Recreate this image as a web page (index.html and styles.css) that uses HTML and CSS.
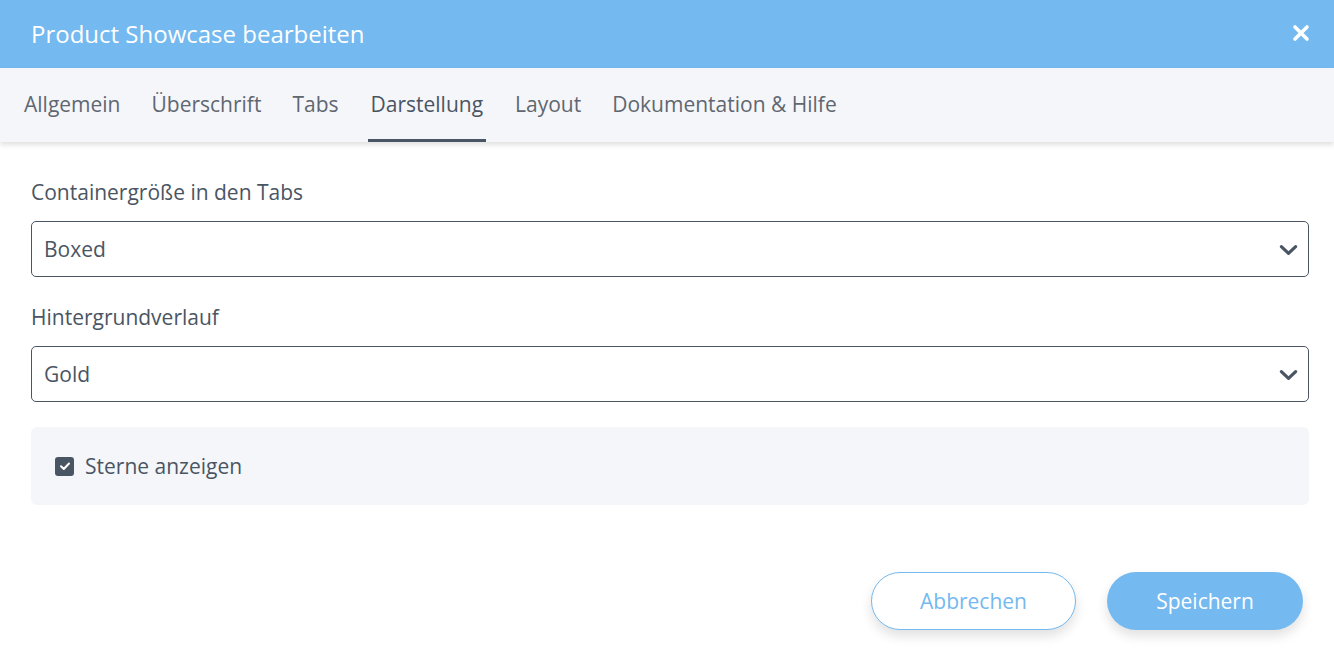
FILE: index.html
```html
<!DOCTYPE html>
<html lang="de">
<head>
<meta charset="utf-8">
<link rel="stylesheet" href="styles.css">
</head>
<body>
<div class="modal">
  <header class="head">
    <h1 class="title">Product Showcase bearbeiten</h1>
    <svg class="close" viewBox="0 0 18 18" width="18" height="18"><path d="M3 3 L15 15 M15 3 L3 15" stroke="#fff" stroke-width="3.6" stroke-linecap="round"/></svg>
  </header>
  <nav class="tabs">
    <span class="tab">Allgemein</span>
    <span class="tab">Überschrift</span>
    <span class="tab">Tabs</span>
    <span class="tab active">Darstellung</span>
    <span class="tab">Layout</span>
    <span class="tab">Dokumentation &amp; Hilfe</span>
  </nav>
  <main class="body">
    <div class="field">
      <label class="label">Containergröße in den Tabs</label>
      <div class="select"><span>Boxed</span>
        <svg class="chev" viewBox="0 0 20 12" width="19" height="12"><path d="M2.5 2.5 L10 9.5 L17.5 2.5" fill="none" stroke="#4a5563" stroke-width="3.4" stroke-linecap="round" stroke-linejoin="round"/></svg>
      </div>
    </div>
    <div class="field">
      <label class="label">Hintergrundverlauf</label>
      <div class="select"><span>Gold</span>
        <svg class="chev" viewBox="0 0 20 12" width="19" height="12"><path d="M2.5 2.5 L10 9.5 L17.5 2.5" fill="none" stroke="#4a5563" stroke-width="3.4" stroke-linecap="round" stroke-linejoin="round"/></svg>
      </div>
    </div>
    <div class="panel">
      <span class="check"><svg viewBox="0 0 18 18" width="18" height="18"><path d="M5 9.3 L7.8 12 L13 6.5" fill="none" stroke="#fff" stroke-width="2" stroke-linecap="round" stroke-linejoin="round"/></svg></span>
      <span class="check-label">Sterne anzeigen</span>
    </div>
  </main>
  <footer class="foot">
    <button class="btn btn-outline">Abbrechen</button>
    <button class="btn btn-fill">Speichern</button>
  </footer>
</div>
</body>
</html>
```
FILE: styles.css
```css
* { box-sizing: border-box; }
html, body { margin: 0; padding: 0; background: #fff; }
body { font-family: "Open Sans", "Noto Sans", sans-serif; color: #4a5563; width: 1334px; height: 664px; overflow: hidden; }
.modal { display: flex; flex-direction: column; height: 664px; }
.head { height: 68px; background: #74b9ef; display: flex; align-items: center; justify-content: space-between; padding: 0 24px 0 31px; }
.title { margin: 0; font-size: 24px; font-weight: 400; color: #fff; letter-spacing: 0; margin-top: -2px; }
.close { display: block; margin-top: -2px; }
.tabs { height: 74px; background: #f5f6fa; display: flex; align-items: stretch; padding-left: 24px; box-shadow: 0 3px 5px rgba(0,0,0,0.12); position: relative; z-index: 1; }
.tab { display: flex; align-items: center; font-size: 21px; color: #606770; margin-right: 31px; padding-top: 1px; border-bottom: 3px solid transparent; }
.tab.active { color: #4a5563; border-bottom-color: #4a5563; padding-left: 3px; padding-right: 3px; margin-left: -2px; margin-right: 29px; }
.body { padding: 36px 25px 0 31px; display: flex; flex-direction: column; }
.field { display: flex; flex-direction: column; margin-bottom: 26px; }
.field + .field { margin-bottom: 24px; }
.label { font-size: 21px; line-height: 28px; margin-bottom: 15px; color: #4a5563; }
.select { height: 56px; border: 1px solid #4a5563; border-radius: 5px; display: flex; align-items: center; justify-content: space-between; padding: 0 10px 0 12px; font-size: 21px; }
.chev { display: block; margin-top: 2px; }
.panel { height: 78px; background: #f5f6fa; border-radius: 6px; display: flex; align-items: center; padding-left: 24px; margin-top: 1px; }
.check { width: 19px; height: 19px; background: #4a5563; border-radius: 3px; display: flex; align-items: center; justify-content: center; margin-right: 11px; }
.check svg { display: block; }
.check-label { font-size: 21px; color: #4a5563; }
.foot { display: flex; justify-content: flex-end; gap: 31px; padding: 67px 31px 0 0; }
.btn { height: 58px; border-radius: 29px; font-family: "Open Sans", "Noto Sans", sans-serif; font-size: 21px; box-shadow: 0 6px 12px rgba(0,0,0,0.12); cursor: pointer; }
.btn-outline { width: 205px; background: #fff; border: 1px solid #74b9ef; color: #74b9ef; }
.btn-fill { width: 196px; background: #74b9ef; border: none; color: #fff; }
```
